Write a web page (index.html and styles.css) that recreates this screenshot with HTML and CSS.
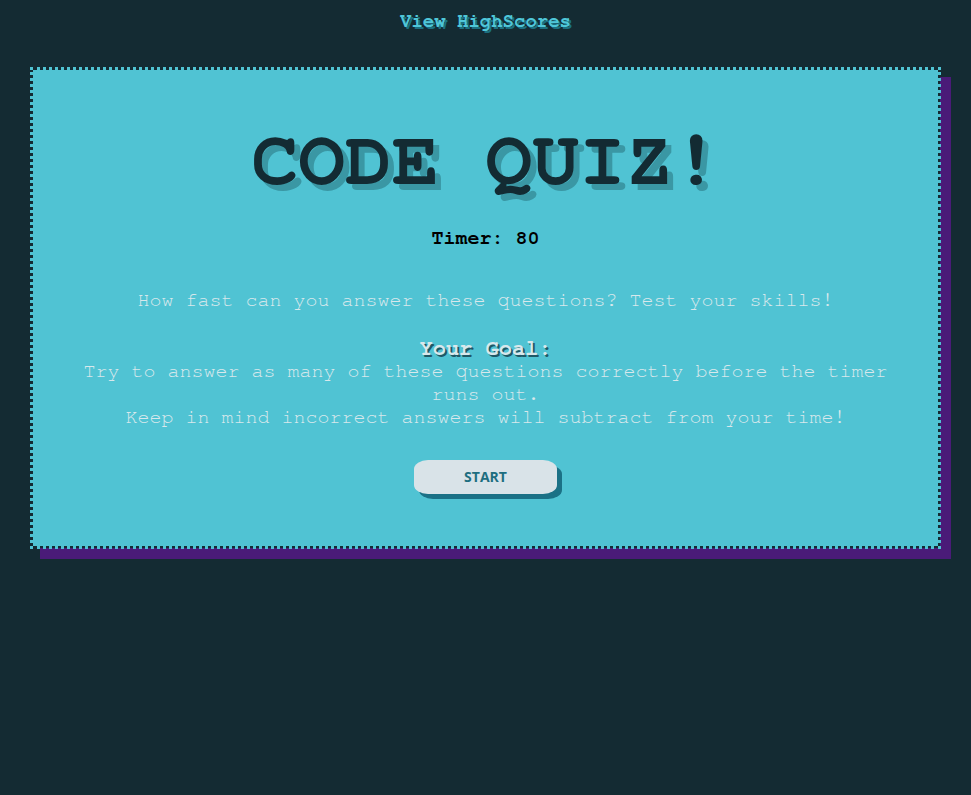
FILE: index.html
```html
<!DOCTYPE html>
<html lang="en">
<head>
<meta charset="utf-8">
<title>Code Quiz</title>
<link rel="stylesheet" href="styles.css">
</head>
<body>
<header class="top">
  <a class="scores-link" href="#">View HighScores</a>
</header>
<main class="card">
  <h1 class="title">CODE QUIZ!</h1>
  <div class="timer">Timer: 80</div>
  <p class="intro">How fast can you answer these questions? Test your skills!</p>
  <div class="goal">
    <div class="goal-head">Your Goal:</div>
    <div class="goal-text">Try to answer as many of these questions correctly before the timer runs out.</div>
    <div class="goal-text">Keep in mind incorrect answers will subtract from your time!</div>
  </div>
  <button class="start-btn" type="button">START</button>
</main>
</body>
</html>
```
FILE: styles.css
```css
html, body {
  margin: 0;
  padding: 0;
}
body {
  background: #142b33;
  font-family: "Nimbus Mono PS", "Nimbus Mono L", "FreeMono", "Liberation Mono", "Courier New", monospace;
  height: 795px;
}
.top {
  text-align: center;
  padding-top: 12px;
  height: 57px;
  box-sizing: border-box;
}
.scores-link {
  color: #4fc6d8;
  font-weight: bold;
  font-size: 19px;
  text-decoration: none;
  text-shadow: 2px 2px 0 #1b6f80;
}
.card {
  margin: 10px 30px 0;
  border: 3px dotted #50c3d3;
  background: #50c3d3;
  background-clip: padding-box;
  box-shadow: 10px 10px 0 #4a1b78;
  text-align: center;
  padding: 45px 50px 52px;
}
.title {
  margin: 0;
  font-size: 78px;
  font-weight: bold;
  color: #132b33;
  text-shadow: 6px 6px 0 #3a97a4;
  line-height: 1.2;
}
.timer {
  margin-top: 19px;
  font-size: 20px;
  font-weight: bold;
  color: #000;
}
.intro {
  margin: 42px 0 0;
  font-size: 20px;
  color: #d8e8ec;
}
.goal {
  margin-top: 26px;
  font-size: 20px;
  color: #d8e8ec;
  line-height: 23px;
}
.goal-head {
  font-size: 22px;
  line-height: 24px;
  font-weight: bold;
  text-shadow: 2px 2px 0 #1f5866;
}
.start-btn {
  margin-top: 31px;
  width: 143px;
  height: 34px;
  border: none;
  background: #d9e3e8;
  border-radius: 14px / 9px;
  box-shadow: 5px 5px 0 #1b7186;
  font-family: "Open Sans", "Noto Sans", sans-serif;
  font-weight: bold;
  font-size: 14px;
  color: #1e6e80;
  padding: 0;
}
```
